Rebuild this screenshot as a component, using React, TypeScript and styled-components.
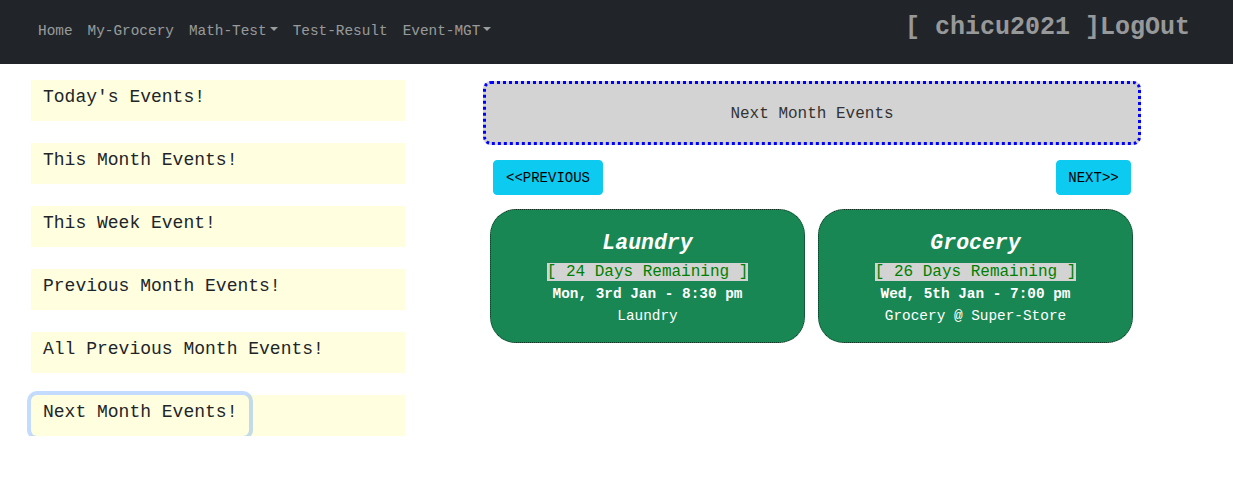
import React from "react";
import styled, { createGlobalStyle } from "styled-components";

const Global = createGlobalStyle`
  * { box-sizing: border-box; }
  body {
    margin: 0;
    background: #ffffff;
    font-family: "Liberation Mono", "Courier New", monospace;
    color: #212529;
  }
`;

const Navbar = styled.nav`
  height: 64px;
  background: #212529;
  display: flex;
  align-items: center;
  justify-content: space-between;
  padding: 0 43px 0 38px;
`;

const NavLinks = styled.div`
  display: flex;
  align-items: center;
  gap: 15px;
  margin-bottom: 3px;
`;

const NavLink = styled.a`
  font-size: 14.4px;
  line-height: 20px;
  color: rgba(255, 255, 255, 0.55);
  text-decoration: none;
  display: inline-flex;
  align-items: center;
`;

const Caret = styled.span`
  display: inline-block;
  margin-left: 3px;
  width: 0;
  height: 0;
  border-top: 4.5px solid rgba(255, 255, 255, 0.55);
  border-left: 4.3px solid transparent;
  border-right: 4.3px solid transparent;
  margin-top: -4px;
`;

const Brand = styled.div`
  font-size: 25px;
  font-weight: bold;
  color: rgba(255, 255, 255, 0.55);
  margin-bottom: 10px;
`;

const Main = styled.main`
  display: flex;
  align-items: flex-start;
  padding: 16px 0 0 31px;
`;

const Sidebar = styled.div`
  width: 374px;
  display: flex;
  flex-direction: column;
  gap: 22px;
`;

const SideItem = styled.div`
  background: #ffffe0;
  height: 41px;
`;

const SideButton = styled.button<{ $focused?: boolean }>`
  font-family: "Liberation Mono", "Courier New", monospace;
  font-size: 18px;
  line-height: 27px;
  color: #212529;
  background: #ffffe0;
  border: 1px solid transparent;
  border-radius: 6px;
  height: 41px;
  padding: 3px 11px 9px 11px;
  cursor: pointer;
  box-shadow: ${(p) => (p.$focused ? "0 0 0 4px rgba(13, 110, 253, 0.25)" : "none")};
  outline: none;
`;

const Content = styled.section`
  margin-left: 78px;
  width: 658px;
  padding-top: 1px;
`;

const Header = styled.div`
  height: 64px;
  border: 3px dotted #0000ff;
  border-radius: 8px;
  background: #d3d3d3;
  display: flex;
  align-items: center;
  justify-content: center;
  font-size: 16px;
  color: #333333;
  padding-top: 2px;
`;

const Pager = styled.div`
  margin-top: 15px;
  padding: 0 10px;
  display: flex;
  justify-content: space-between;
`;

const PagerButton = styled.button<{ $w: number }>`
  width: ${(p) => p.$w}px;
  height: 35px;
  background: #0dcaf0;
  border: 1px solid #0dcaf0;
  border-radius: 4px;
  font-family: "Liberation Mono", "Courier New", monospace;
  font-size: 14px;
  color: #000000;
  padding: 0;
  cursor: pointer;
`;

const Cards = styled.div`
  margin-top: 14px;
  padding: 0 8px 0 7px;
  display: grid;
  grid-template-columns: 315px 315px;
  gap: 13px;
`;

const Card = styled.div`
  height: 134px;
  background: #198754;
  border: 1px dotted #0f2e1f;
  border-radius: 26px;
  display: flex;
  flex-direction: column;
  align-items: center;
  padding-top: 20px;
  color: #ffffff;
`;

const Title = styled.div`
  font-size: 21.5px;
  line-height: 26px;
  font-weight: bold;
  font-style: italic;
`;

const Remaining = styled.div`
  margin-top: 7px;
  font-size: 16px;
  line-height: 18px;
  background: #d3d3d3;
  color: #008000;
`;

const DateLine = styled.div`
  margin-top: 3px;
  font-size: 14.4px;
  line-height: 20px;
  font-weight: bold;
`;

const Desc = styled.div`
  margin-top: 2px;
  font-size: 14.4px;
  line-height: 20px;
`;

const sideItems = [
  "Today's Events!",
  "This Month Events!",
  "This Week Event!",
  "Previous Month Events!",
  "All Previous Month Events!",
  "Next Month Events!",
];

const events = [
  { title: "Laundry", days: 24, date: "Mon, 3rd Jan - 8:30 pm", desc: "Laundry" },
  { title: "Grocery", days: 26, date: "Wed, 5th Jan - 7:00 pm", desc: "Grocery @ Super-Store" },
];

export default function App() {
  return (
    <>
      <Global />
      <Navbar>
        <NavLinks>
          <NavLink href="#">Home</NavLink>
          <NavLink href="#">My-Grocery</NavLink>
          <NavLink href="#">
            Math-Test
            <Caret />
          </NavLink>
          <NavLink href="#">Test-Result</NavLink>
          <NavLink href="#">
            Event-MGT
            <Caret />
          </NavLink>
        </NavLinks>
        <Brand>[ chicu2021 ]LogOut</Brand>
      </Navbar>
      <Main>
        <Sidebar>
          {sideItems.map((s, i) => (
            <SideItem key={s}>
              <SideButton $focused={i === sideItems.length - 1}>{s}</SideButton>
            </SideItem>
          ))}
        </Sidebar>
        <Content>
          <Header>Next Month Events</Header>
          <Pager>
            <PagerButton $w={110}>&lt;&lt;PREVIOUS</PagerButton>
            <PagerButton $w={75}>NEXT&gt;&gt;</PagerButton>
          </Pager>
          <Cards>
            {events.map((e) => (
              <Card key={e.title}>
                <Title>{e.title}</Title>
                <Remaining>[ {e.days} Days Remaining ]</Remaining>
                <DateLine>{e.date}</DateLine>
                <Desc>{e.desc}</Desc>
              </Card>
            ))}
          </Cards>
        </Content>
      </Main>
    </>
  );
}
